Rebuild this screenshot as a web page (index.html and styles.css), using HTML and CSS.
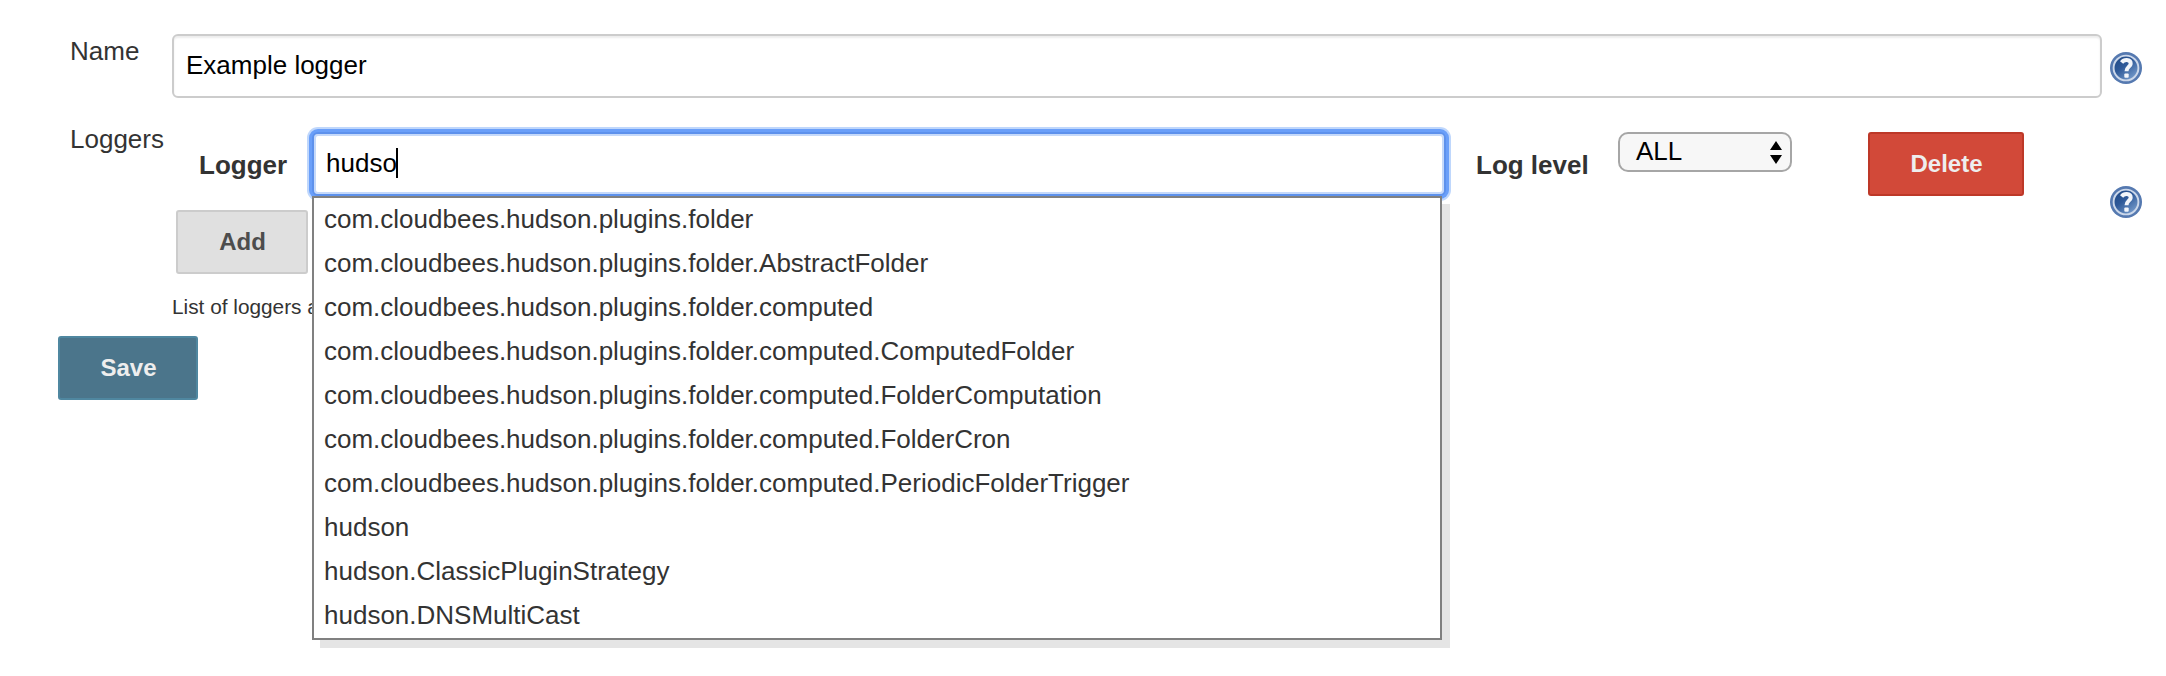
FILE: index.html
```html
<!DOCTYPE html>
<html lang="en">
<head>
<meta charset="utf-8">
<title>Log recorder</title>
<link rel="stylesheet" href="styles.css">
</head>
<body>
<svg class="defs" width="0" height="0">
  <defs>
    <linearGradient id="disc" x1="0.1" y1="0.1" x2="0.8" y2="1">
      <stop offset="0" stop-color="#204a87"/><stop offset="0.4" stop-color="#2f5a99"/><stop offset="1" stop-color="#7ba0cf"/>
    </linearGradient>
    <symbol id="help" viewBox="0 0 32 32">
      <circle cx="16" cy="16" r="16" fill="#5579b0"/>
      <circle cx="16" cy="16" r="12.4" fill="url(#disc)" stroke="#ccd8ea" stroke-width="1.9"/>
      <path d="M11.6 10.4C13 8.6 14.8 8 16.8 8.1C19.5 8.3 20.8 9.8 20.7 11.8C20.5 14.6 16.5 15 16.5 19.2" fill="none" stroke="#f2f5fa" stroke-width="4"/>
      <rect x="14.3" y="21.4" width="4.4" height="4.4" rx="1" fill="#f2f5fa"/>
    </symbol>
  </defs>
</svg>
<form class="form">
  <div class="row name-row">
    <label class="label">Name</label>
    <div class="field text-field">Example logger</div>
    <svg class="help"><use href="#help"/></svg>
  </div>
  <div class="row loggers-row">
    <label class="label">Loggers</label>
    <div class="content">
      <div class="entry">
        <span class="caption">Logger</span>
        <div class="combo">
          <div class="field focused">hudso<span class="caret"></span></div>
          <div class="menu">
            <div class="item">com.cloudbees.hudson.plugins.folder</div>
            <div class="item">com.cloudbees.hudson.plugins.folder.AbstractFolder</div>
            <div class="item">com.cloudbees.hudson.plugins.folder.computed</div>
            <div class="item">com.cloudbees.hudson.plugins.folder.computed.ComputedFolder</div>
            <div class="item">com.cloudbees.hudson.plugins.folder.computed.FolderComputation</div>
            <div class="item">com.cloudbees.hudson.plugins.folder.computed.FolderCron</div>
            <div class="item">com.cloudbees.hudson.plugins.folder.computed.PeriodicFolderTrigger</div>
            <div class="item">hudson</div>
            <div class="item">hudson.ClassicPluginStrategy</div>
            <div class="item">hudson.DNSMultiCast</div>
          </div>
        </div>
        <span class="caption level">Log level</span>
        <div class="select">ALL
          <svg width="12" height="23" viewBox="0 0 12 23"><path d="M0 9L6 0L12 9ZM0 14H12L6 23Z"/></svg>
        </div>
        <div class="button delete">Delete</div>
      </div>
      <div class="button add">Add</div>
      <div class="note">List of loggers a</div>
    </div>
    <svg class="help"><use href="#help"/></svg>
  </div>
  <div class="button save">Save</div>
</form>
</body>
</html>
```
FILE: styles.css
```css
* { box-sizing: border-box; }
body {
  margin: 0;
  min-height: 676px;
  background: #fff;
  color: #333;
  font: 26px/30px "Liberation Sans", Arial, Helvetica, sans-serif;
}
.defs { display: block; }
.form { padding: 34px 24px 0 70px; }
.row { display: flex; align-items: flex-start; }
.label { width: 102px; flex: none; }
.name-row { height: 98px; }
.name-row .label { padding-top: 2px; }
.loggers-row { height: 204px; }
.loggers-row .label { margin-top: -8px; }
.field {
  height: 64px;
  border: 2px solid #ccc;
  border-radius: 6px;
  padding: 14px 12px 0;
  color: #000;
  background: #fff;
  white-space: nowrap;
}
.text-field { width: 1930px; box-shadow: inset 0 2px 2px rgba(0, 0, 0, .075); }
.help { width: 32px; height: 32px; margin: 18px 0 0 8px; flex: none; }
.content { width: 1930px; flex: none; }
.loggers-row .help { margin-top: 54px; }
.entry { display: flex; align-items: flex-start; height: 78px; }
.caption { width: 140px; padding: 18px 0 0 27px; font-weight: bold; flex: none; white-space: nowrap; }
.combo { position: relative; width: 1134px; flex: none; }
.focused {
  border: 2px solid #5d91ec;
  box-shadow: 0 0 0 3px #6a9ff9, 0 0 0 5px #bfd7fc, inset 0 0 0 2px #c5d9fa;
}
.caret { display: inline-block; width: 2px; height: 30px; margin-left: -1px; background: #000; vertical-align: top; }
.menu {
  position: absolute;
  z-index: 2;
  left: 0;
  top: 64px;
  width: 1130px;
  border: 2px solid #808080;
  background: #fff;
  box-shadow: 8px 8px 0 #e5e5e5;
}
.item { height: 44px; padding-left: 10px; line-height: 42px; white-space: nowrap; }
.level { width: 172px; padding-left: 30px; }
.select {
  display: flex;
  justify-content: space-between;
  width: 174px;
  height: 40px;
  padding: 2px 8px 0 16px;
  border: 2px solid #a6a6a6;
  border-radius: 10px;
  background: #f7f7f7;
  color: #000;
}
.select svg { margin-top: 4.5px; }
.button {
  height: 64px;
  border: 2px solid;
  border-radius: 3px;
  padding-left: 1px;
  font-size: 24px;
  font-weight: bold;
  line-height: 60px;
  text-align: center;
}
.delete { width: 156px; margin-left: 76px; background: #d24939; border-color: #bd3828; color: #eee; }
.add { width: 132px; margin-left: 4px; background: #e0e0e0; border-color: #ccc; color: #4d4d4d; }
.note { padding-top: 20px; font-size: 20.8px; line-height: 26px; white-space: nowrap; }
.save { width: 140px; margin-left: -12px; background: #4b758b; border-color: #4f87a0; color: #eee; }
```
